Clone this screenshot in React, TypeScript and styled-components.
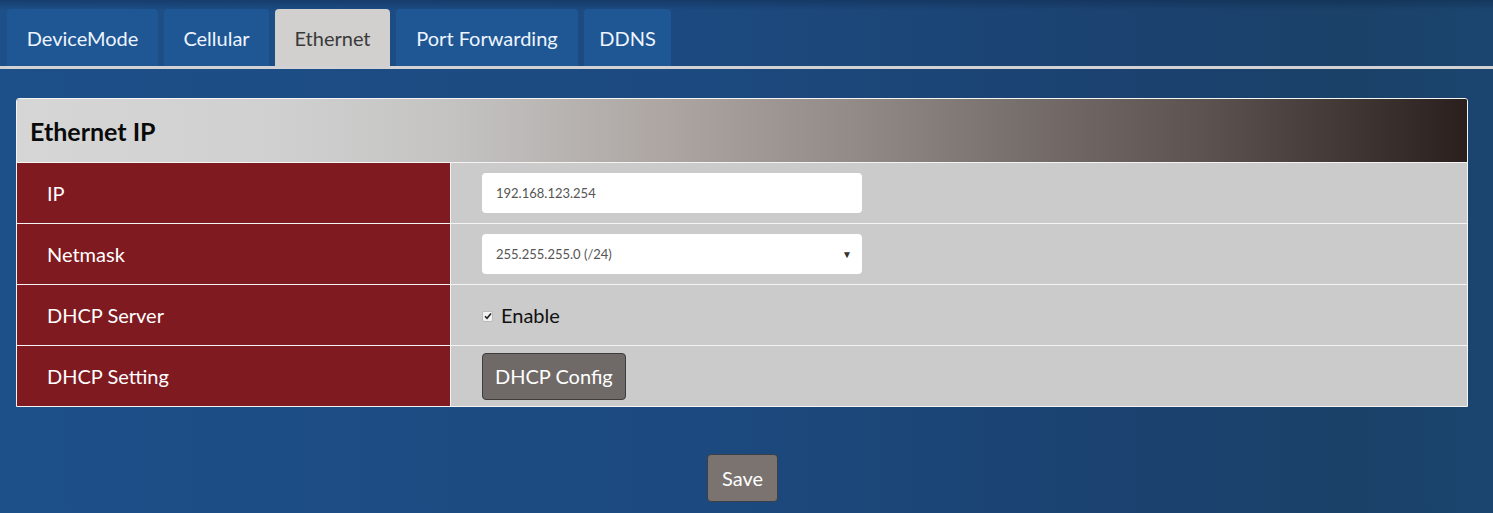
import React from "react";
import styled, { createGlobalStyle } from "styled-components";

const Global = createGlobalStyle`
  html, body { margin: 0; padding: 0; }
  body {
    font-family: Lato, "Open Sans", "Liberation Sans", sans-serif;
    background: #1c4a7e;
  }
`;

const Page = styled.div`
  width: 1493px;
  height: 513px;
  overflow: hidden;
  background:
    linear-gradient(180deg, rgba(10, 30, 60, 0.35) 0px, rgba(10, 30, 60, 0) 10px),
    linear-gradient(90deg, #1d4f88 0%, #1c4a80 45%, #1b4270 75%, #1a4168 90%, #1b456f 100%);
  display: flex;
  flex-direction: column;
`;

const TabBar = styled.nav`
  display: flex;
  gap: 6px;
  padding: 9px 0 0 7px;
  border-bottom: 3px solid #d2d2d4;
`;

const Tab = styled.div<{ $active?: boolean; $w: number }>`
  width: ${(p) => p.$w}px;
  height: 57px;
  box-sizing: border-box;
  display: flex;
  align-items: center;
  justify-content: center;
  font-size: 20px;
  border-radius: 4px 4px 0 0;
  background: ${(p) => (p.$active ? "#d1d0ce" : "#1e5794")};
  color: ${(p) => (p.$active ? "#3a3a3a" : "#eef4ff")};
`;

const Panel = styled.section`
  margin: 29px 25px 0 16px;
  border: 1px solid #f4f4f4;
  border-radius: 3px 3px 0 0;
  overflow: hidden;
`;

const PanelHeader = styled.h2`
  margin: 0;
  height: 63px;
  display: flex;
  align-items: center;
  padding-left: 13px;
  font-size: 25px;
  font-weight: 700;
  color: #0a0a0a;
  border-bottom: 1px solid #f4f4f4;
  background: linear-gradient(
    90deg,
    #d6d6d6 0%,
    #d0d0d0 18%,
    #c4c3c2 30%,
    #aca5a2 45%,
    #918a87 58%,
    #756d6a 70%,
    #5c5350 82%,
    #433a37 91%,
    #2a1f1c 100%
  );
`;

const Row = styled.div`
  display: grid;
  grid-template-columns: 434px 1fr;
  height: 60px;
  border-bottom: 1px solid #f4f4f4;
  &:last-child { border-bottom: none; }
`;

const Label = styled.div`
  background: #7f1a20;
  color: #ffffff;
  font-size: 20px;
  display: flex;
  align-items: center;
  padding-left: 30px;
  border-right: 1px solid #f4f4f4;
`;

const Value = styled.div`
  background: #cbcbcb;
  display: flex;
  align-items: center;
  padding-left: 31px;
`;

const TextBox = styled.div`
  width: 380px;
  height: 40px;
  box-sizing: border-box;
  background: #fff;
  border-radius: 4px;
  display: flex;
  align-items: center;
  justify-content: space-between;
  padding: 0 10px 0 14px;
  font-size: 13px;
  color: #555;
`;

const Caret = styled.span`
  font-size: 10px;
  color: #333;
`;

const Check = styled.span`
  width: 11px;
  height: 11px;
  box-sizing: border-box;
  background: #f2f2f2;
  border: 1px solid #bbb;
  border-radius: 2px;
  display: inline-flex;
  align-items: center;
  justify-content: center;
  margin-right: 8px;
  margin-top: 2px;
`;

const CheckLabel = styled.label`
  display: flex;
  align-items: center;
  font-size: 20px;
  color: #111;
`;

const GrayButton = styled.button<{ $pad: number; $h: number }>`
  height: ${(p) => p.$h}px;
  padding: 0 ${(p) => p.$pad}px;
  background: #6f6a67;
  border: 1px solid #3f3c3b;
  border-radius: 4px;
  color: #fff;
  font-family: inherit;
  font-size: 20px;
`;

const Footer = styled.div`
  display: flex;
  justify-content: center;
  padding: 47px 0 0 0;
  margin-left: -8px;
`;

const SaveButton = styled(GrayButton)`
  background: #7a7370;
  border-color: #3a3f48;
`;

export default function App() {
  const tabs = [
    { name: "DeviceMode", w: 151 },
    { name: "Cellular", w: 105 },
    { name: "Ethernet", w: 115, active: true },
    { name: "Port Forwarding", w: 182 },
    { name: "DDNS", w: 87 },
  ];
  return (
    <Page>
      <Global />
      <TabBar>
        {tabs.map((t) => (
          <Tab key={t.name} $w={t.w} $active={t.active}>
            {t.name}
          </Tab>
        ))}
      </TabBar>
      <Panel>
        <PanelHeader>Ethernet IP</PanelHeader>
        <Row>
          <Label>IP</Label>
          <Value>
            <TextBox>192.168.123.254</TextBox>
          </Value>
        </Row>
        <Row>
          <Label>Netmask</Label>
          <Value>
            <TextBox>
              255.255.255.0 (/24)
              <Caret>▼</Caret>
            </TextBox>
          </Value>
        </Row>
        <Row>
          <Label>DHCP Server</Label>
          <Value>
            <CheckLabel>
              <Check>
                <svg width="8" height="8" viewBox="0 0 8 8">
                  <path d="M1 4.2 L3 6.2 L7 1.5" stroke="#222" strokeWidth="1.6" fill="none" />
                </svg>
              </Check>
              Enable
            </CheckLabel>
          </Value>
        </Row>
        <Row>
          <Label>DHCP Setting</Label>
          <Value>
            <GrayButton $pad={12} $h={47}>DHCP Config</GrayButton>
          </Value>
        </Row>
      </Panel>
      <Footer>
        <SaveButton $pad={14} $h={48}>Save</SaveButton>
      </Footer>
    </Page>
  );
}
